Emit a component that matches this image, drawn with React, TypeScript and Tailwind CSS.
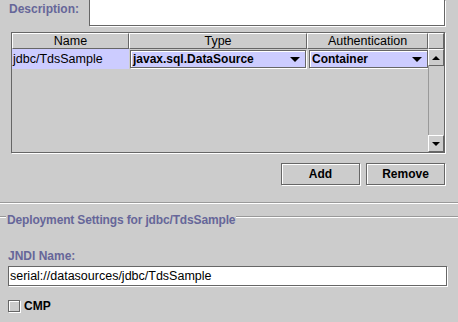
import React from 'react';

const DownTriangle: React.FC<{ w?: number; h?: number }> = ({ w = 10, h = 5 }) => (
  <svg width={w} height={h} viewBox={`0 0 ${w} ${h}`} className="block">
    <polygon points={`0,0 ${w},0 ${w / 2},${h}`} fill="#000" />
  </svg>
);

const UpTriangle: React.FC<{ w?: number; h?: number }> = ({ w = 8, h = 4 }) => (
  <svg width={w} height={h} viewBox={`0 0 ${w} ${h}`} className="block">
    <polygon points={`0,${h} ${w},${h} ${w / 2},0`} fill="#000" />
  </svg>
);

const HeaderCell: React.FC<{ width: string; label?: string }> = ({ width, label }) => (
  <div
    className={`${width} h-full flex items-center justify-center border-t border-l border-white border-r border-b border-r-[#666666] border-b-[#666666] text-black text-[12.5px] leading-[14px]`}
  >
    {label}
  </div>
);

const Combo: React.FC<{ value: string }> = ({ value }) => (
  <div className="w-full h-[18px] flex items-center justify-between bg-[#ccccff] border border-[#666666] shadow-[1px_1px_0_#ffffff,inset_1px_1px_0_#ffffff] pl-[2px] pr-[5px]">
    <span className="font-bold text-black leading-[14px]">{value}</span>
    <DownTriangle />
  </div>
);

const ScrollButton: React.FC<{ up?: boolean }> = ({ up }) => (
  <div className="h-[17px] flex items-center justify-center bg-[#cccccc] border-t border-l border-white border-r border-b border-r-[#666666] border-b-[#666666]">
    {up ? <UpTriangle /> : <DownTriangle w={8} h={4} />}
  </div>
);

const MetalButton: React.FC<{ label: string }> = ({ label }) => (
  <button className="w-[79px] h-[22px] flex items-center justify-center bg-[#cccccc] border border-[#666666] shadow-[1px_1px_0_#ffffff,inset_1px_1px_0_#ffffff] font-bold text-black leading-[14px]">
    {label}
  </button>
);

const App: React.FC = () => {
  return (
    <div className="w-[458px] h-[322px] overflow-hidden bg-[#cccccc] font-['Liberation_Sans',Arial,sans-serif] text-[12px] flex flex-col">
      {/* Description */}
      <div className="flex items-start h-[26px] shrink-0">
        <div className="w-[89px] pl-[9px] pt-[2px] font-bold text-[#666699] leading-[14px]">
          Description:
        </div>
        <div className="w-[356px] h-[26px] bg-white border-l border-r border-b border-[#666666] shadow-[1px_1px_0_#ffffff]" />
      </div>

      {/* Resource table */}
      <div className="mt-[6px] ml-[11px] w-[434px] h-[121px] shrink-0 border border-[#666666] shadow-[1px_1px_0_#ffffff] flex">
        <div className="w-[416px] flex flex-col">
          <div className="h-[16px] flex">
            <HeaderCell width="w-[117px]" label="Name" />
            <HeaderCell width="w-[178px]" label="Type" />
            <HeaderCell width="w-[121px]" label="Authentication" />
          </div>
          <div className="h-[20px] flex">
            <div className="w-[117px] h-full bg-[#ccccff] flex items-center pl-[1px] leading-[14px] text-[12.5px] text-black">
              jdbc/TdsSample
            </div>
            <div className="w-[178px] h-full flex items-center pl-[1px] pr-[1px]">
              <Combo value="javax.sql.DataSource" />
            </div>
            <div className="w-[121px] h-full flex items-center pl-[2px]">
              <Combo value="Container" />
            </div>
          </div>
        </div>
        <div className="w-[16px] flex flex-col">
          <div className="h-[16px]">
            <HeaderCell width="w-[16px]" />
          </div>
          <ScrollButton up />
          <div className="flex-1 border-l border-[#999999]" />
          <ScrollButton />
        </div>
      </div>

      {/* Add / Remove */}
      <div className="mt-[10px] pr-[13px] flex justify-end gap-[6px] shrink-0">
        <MetalButton label="Add" />
        <MetalButton label="Remove" />
      </div>

      {/* Separator */}
      <div className="mt-[17px] h-[2px] shrink-0 border-t border-[#999999] border-b border-b-white" />

      {/* Deployment settings */}
      <div className="mt-[9px] flex items-start shrink-0">
        <div className="w-[6px] mt-[3px] h-[2px] border-t border-[#999999] border-b border-b-white" />
        <div className="px-[1px] font-bold text-[#666699] leading-[14px] whitespace-nowrap tracking-[-0.15px]">
          Deployment Settings for jdbc/TdsSample
        </div>
        <div className="flex-1 mt-[3px] h-[2px] border-t border-[#999999] border-b border-b-white" />
      </div>

      <div className="mt-[22px] pl-[8px] font-bold text-[#666699] leading-[14px] shrink-0">
        JNDI Name:
      </div>

      <div className="mt-[3px] ml-[8px] w-[439px] h-[20px] shrink-0 bg-white border border-[#666666] shadow-[1px_1px_0_#ffffff] flex items-center pl-[1px] leading-[14px] text-[12.5px] text-black">
        serial://datasources/jdbc/TdsSample
      </div>

      <div className="mt-[13px] ml-[8px] flex items-center gap-[4px] h-[13px] shrink-0">
        <div className="w-[12px] h-[12px] bg-[#cccccc] border border-[#666666] shadow-[1px_1px_0_#ffffff,inset_1px_1px_0_#ffffff]" />
        <span className="font-bold text-black leading-[14px]">CMP</span>
      </div>
    </div>
  );
};

export default App;
